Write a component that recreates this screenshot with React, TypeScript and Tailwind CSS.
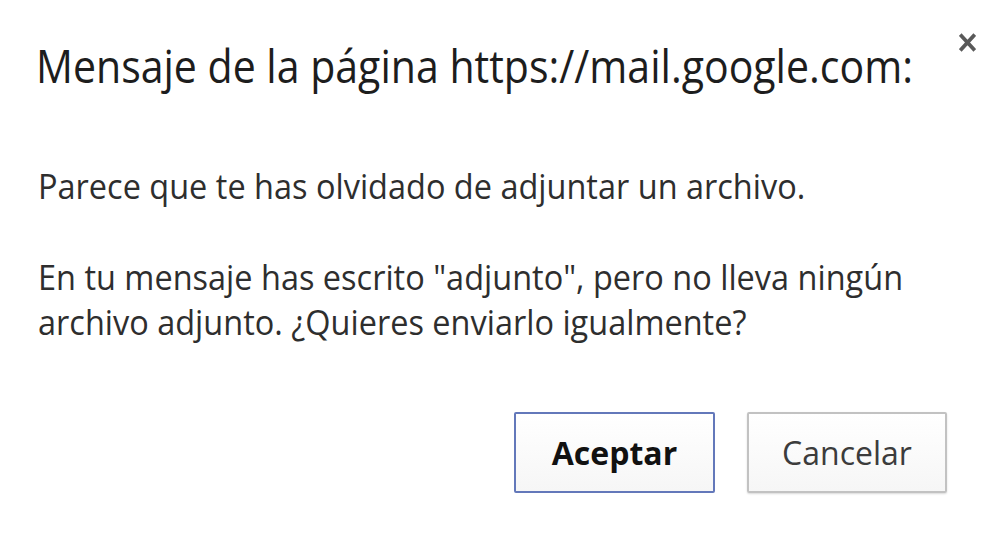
import React from 'react';

const font = "font-['Open_Sans','Noto_Sans',sans-serif]";

function Squish({
  children,
  className = '',
}: {
  children: React.ReactNode;
  className?: string;
}) {
  return (
    <span className={`inline-block whitespace-nowrap ${className}`}>
      {children}
    </span>
  );
}

export default function App() {
  return (
    <div className={`h-[556px] w-[990px] overflow-hidden bg-white ${font}`}>
      {/* Header */}
      <div className="flex items-start justify-between pt-[38px] pr-[14px] pl-[36px]">
        <h1 className="min-w-0 flex-1 text-[45px] leading-[56px] font-normal text-[#1d1d1d]">
          <Squish className="origin-left scale-x-[0.912]">
            Mensaje de la página https://mail.google.com:
          </Squish>
        </h1>
        <button className="-mt-[6px] flex h-[21px] w-[17px] shrink-0 items-center justify-center">
          <svg viewBox="0 0 17 21" className="h-[21px] w-[17px]">
            <path
              d="M2.5 4 L14.5 17 M14.5 4 L2.5 17"
              stroke="#595959"
              strokeWidth="3.8"
              strokeLinecap="square"
              fill="none"
            />
          </svg>
        </button>
      </div>

      {/* Body */}
      <div className="mt-[69px] flex flex-col gap-[46px] pl-[38px] text-[35px] leading-[45px] text-[#2e2e2e]">
        <p>
          <Squish className="origin-left scale-x-[0.928]">
            Parece que te has olvidado de adjuntar un archivo.
          </Squish>
        </p>
        <p className="flex flex-col">
          <Squish className="origin-left scale-x-[0.928]">
            En tu mensaje has escrito "adjunto", pero no lleva ningún
          </Squish>
          <Squish className="origin-left scale-x-[0.928]">
            archivo adjunto. ¿Quieres enviarlo igualmente?
          </Squish>
        </p>
      </div>

      {/* Actions */}
      <div className="mt-[68px] flex justify-end gap-[32px] pr-[43px]">
        <button className="flex h-[81px] w-[201px] items-center justify-center rounded-[2px] border-2 border-[#6378ba] bg-gradient-to-b from-white to-[#f6f6f6] text-[32px] font-bold text-[#111]">
          Aceptar
        </button>
        <button className="flex h-[81px] w-[200px] items-center justify-center rounded-[2px] border-2 border-[#c2c2c2] bg-gradient-to-b from-white to-[#f6f6f6] text-[32px] text-[#3c3c3c] shadow-[0_1px_2px_rgba(0,0,0,0.15)]">
          Cancelar
        </button>
      </div>
    </div>
  );
}
